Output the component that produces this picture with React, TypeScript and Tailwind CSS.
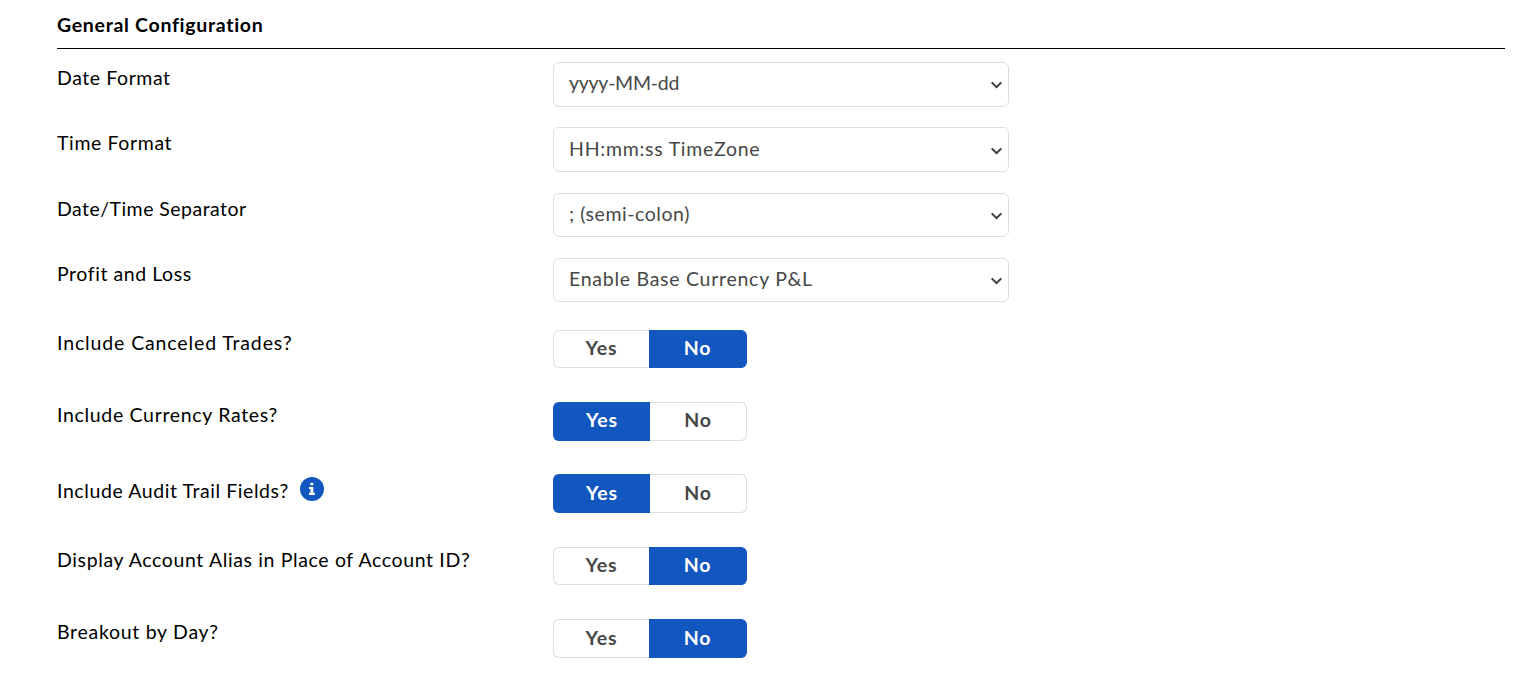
import type { ReactNode } from "react";

function Row({ label, labelClass, rowClass, children }: { label: ReactNode; labelClass: string; rowClass: string; children: ReactNode }) {
  return (
    <div className={`flex items-start ${rowClass}`}>
      <div className={`flex w-[496px] shrink-0 whitespace-nowrap ${labelClass}`}>{label}</div>
      {children}
    </div>
  );
}

function Select({ value, className }: { value: string; className: string }) {
  return (
    <div className={`flex w-[456px] justify-between rounded-md border border-[#dedede] bg-white pl-[15px] pr-[6px] text-[#474747] ${className}`}>
      <span className="whitespace-nowrap">{value}</span>
      <svg className="mt-[11px] h-[10px] w-[12px]" viewBox="0 0 12 10" fill="none" stroke="#3c3c3c" strokeWidth="2">
        <path d="M1.700 2.400 6.500 7.200l4.800-4.800" />
      </svg>
    </div>
  );
}

function Toggle({ yes, className }: { yes: boolean; className: string }) {
  const on = "bg-[#1257c0] text-white border-[#1257c0]";
  const off = "bg-white text-[#474747] border-[#dedede]";
  return (
    <div className={`flex w-[194px] text-center font-bold tracking-[0.9px] ${className}`}>
      <div className={`rounded-l-md border-y border-l ${yes ? `w-[97px] ${on}` : `w-[96px] ${off}`}`}>Yes</div>
      <div className={`flex-1 rounded-r-md border-y border-r ${yes ? off : on}`}>No</div>
    </div>
  );
}

export default function App() {
  return (
    <main className="h-[686px] w-[1525px] overflow-hidden bg-white pl-[57px] pr-[20px] font-['Lato',sans-serif] text-[19.5px] leading-[28px] text-black">
      <h2 className="h-[49px] border-b border-black pt-[11px] font-bold tracking-[0.7px]">General Configuration</h2>
      <section className="pt-[13px]">
        <Row rowClass="h-[65px]" labelClass="pt-[2px] tracking-[0.58px]" label="Date Format">
          <Select value="yyyy-MM-dd" className="h-[45px] pt-[6px] tracking-[-0.27px]" />
        </Row>
        <Row rowClass="h-[66px]" labelClass="pt-[2px] tracking-[0.62px]" label="Time Format">
          <Select value="HH:mm:ss TimeZone" className="h-[45px] pt-[7px] tracking-[0.75px]" />
        </Row>
        <Row rowClass="h-[65px]" labelClass="pt-[2px] tracking-[0.47px]" label="Date/Time Separator">
          <Select value="; (semi-colon)" className="h-[44px] pt-[6px] tracking-[0.55px]" />
        </Row>
        <Row rowClass="h-[64px]" labelClass="pt-[2px] tracking-[0.56px]" label="Profit and Loss">
          <Select value="Enable Base Currency P&L" className="h-[44px] pt-[6px] tracking-[0.73px]" />
        </Row>
        <Row rowClass="h-[72px]" labelClass="pt-[7px] tracking-[0.87px]" label="Include Canceled Trades?">
          <Toggle yes={false} className="mt-[8px] h-[38px] leading-[34px]" />
        </Row>
        <Row rowClass="h-[72px]" labelClass="pt-[7px] tracking-[0.67px]" label="Include Currency Rates?">
          <Toggle yes className="mt-[8px] h-[39px] leading-[34px]" />
        </Row>
        <Row
          rowClass="h-[73px]"
          labelClass="pt-[11px] tracking-[0.58px]"
          label={
            <>
              <span className="w-[243px]">Include Audit Trail Fields?</span>
              <svg className="h-[24px] w-[24px]" viewBox="0 0 24 24">
                <circle cx="12" cy="12" r="12" fill="#1257c0" />
                <path fill="#fff" d="M10.300 5.700h3v2.600h-3zM9 9.900h4.300v5.800h1.600v2.200H9v-2.200h1.500v-3.600H9z" />
              </svg>
            </>
          }
        >
          <Toggle yes className="mt-[8px] h-[39px] leading-[36px]" />
        </Row>
        <Row rowClass="h-[72px]" labelClass="pt-[7px] tracking-[0.63px]" label="Display Account Alias in Place of Account ID?">
          <Toggle yes={false} className="mt-[8px] h-[38px] leading-[34px]" />
        </Row>
        <Row rowClass="h-[72px]" labelClass="pt-[7px] tracking-[0.71px]" label="Breakout by Day?">
          <Toggle yes={false} className="mt-[8px] h-[39px] leading-[36px]" />
        </Row>
      </section>
    </main>
  );
}
